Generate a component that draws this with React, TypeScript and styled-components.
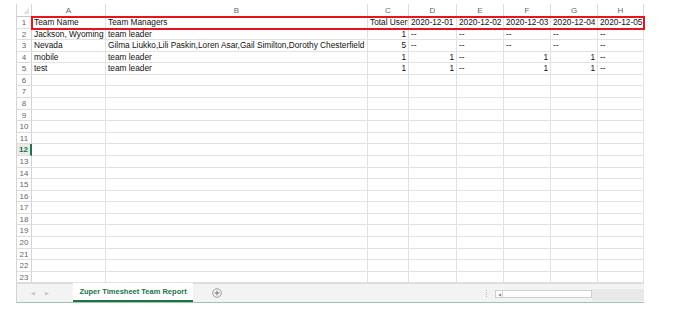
import React from "react";
import styled, { createGlobalStyle } from "styled-components";

const Global = createGlobalStyle`
  html, body { margin: 0; padding: 0; background: #fff; }
  body { font-family: "Liberation Sans", Arial, sans-serif; }
`;

const COLS = [74, 262, 41, 48, 47, 47, 47, 46];
const LETTERS = ["A", "B", "C", "D", "E", "F", "G", "H"];
const ROW_H = 11.58;
const TEMPLATE = COLS.map((c) => `${c}px`).join(" ");

type Cell = { v: string; align?: "left" | "right" };
const L = (v: string): Cell => ({ v, align: "left" });
const R = (v: string): Cell => ({ v, align: "right" });

const DATA: Cell[][] = [
  [L("Team Name"), L("Team Managers"), L("Total Users"), L("2020-12-01"), L("2020-12-02"), L("2020-12-03"), L("2020-12-04"), L("2020-12-05")],
  [L("Jackson, Wyoming"), L("team leader"), R("1"), L("--"), L("--"), L("--"), L("--"), L("--")],
  [L("Nevada"), L("Gilma Liukko,Lili Paskin,Loren Asar,Gail Similton,Dorothy Chesterfield"), R("5"), L("--"), L("--"), L("--"), L("--"), L("--")],
  [L("mobile"), L("team leader"), R("1"), R("1"), L("--"), R("1"), R("1"), L("--")],
  [L("test"), L("team leader"), R("1"), R("1"), L("--"), R("1"), R("1"), L("--")],
];

const Page = styled.div`
  padding: 4px 0 0 16px;
  width: 628px;
`;

const Sheet = styled.div`
  width: 628px;
  border-left: 1px solid #d4d4d4;
  box-sizing: border-box;
  display: flex;
  flex-direction: column;
`;

const HeaderRow = styled.div`
  display: flex;
  height: 13px;
`;

const Corner = styled.div`
  width: 15px;
  height: 13px;
  border-right: 1px solid #d8d8d8;
  border-bottom: 1px solid #c8c8c8;
  box-sizing: border-box;
  position: relative;
  &::after {
    content: "";
    position: absolute;
    right: 2px;
    bottom: 2px;
    width: 0;
    height: 0;
    border-left: 6px solid transparent;
    border-bottom: 6px solid #e2e2e2;
  }
`;

const ColHeads = styled.div`
  display: grid;
  grid-template-columns: ${TEMPLATE};
`;

const ColHead = styled.div`
  font-size: 8px;
  color: #666;
  text-align: center;
  line-height: 13px;
  border-right: 1px solid #dcdcdc;
  border-bottom: 1px solid #c8c8c8;
  box-sizing: border-box;
`;

const Row = styled.div`
  display: flex;
  height: ${ROW_H}px;
`;

const RowHead = styled.div<{ $active?: boolean }>`
  width: 15px;
  flex: none;
  box-sizing: border-box;
  font-size: 8px;
  line-height: ${ROW_H}px;
  text-align: center;
  color: ${(p) => (p.$active ? "#217346" : "#666")};
  font-weight: ${(p) => (p.$active ? 700 : 400)};
  border-right: ${(p) => (p.$active ? "2px solid #217346" : "1px solid #d4d4d4")};
  border-bottom: 1px solid #dedede;
  background: ${(p) => (p.$active ? "#eaeaea" : "#fff")};
`;

const Cells = styled.div<{ $highlight?: boolean }>`
  display: grid;
  grid-template-columns: ${TEMPLATE};
  outline: ${(p) => (p.$highlight ? "2px solid #e8141b" : "none")};
  outline-offset: -1px;
  position: relative;
  z-index: ${(p) => (p.$highlight ? 1 : 0)};
`;

const DataCell = styled.div<{ $align?: "left" | "right" }>`
  font-size: 8.3px;
  color: #111;
  line-height: ${ROW_H}px;
  padding: 0 2px;
  white-space: nowrap;
  overflow: hidden;
  text-align: ${(p) => p.$align ?? "left"};
  border-right: 1px solid #e2e2e2;
  border-bottom: 1px solid #e2e2e2;
  box-sizing: border-box;
`;

const TabBar = styled.div`
  display: flex;
  align-items: stretch;
  height: 18px;
  background: #f3f3f3;
  border-left: 1px solid #d4d4d4;
  border-top: 1px solid #dadada;
  border-bottom: 1px solid #9cc6ae;
  box-sizing: content-box;
  width: 627px;
`;

const Nav = styled.div`
  width: 56px;
  display: flex;
  align-items: center;
  gap: 10px;
  padding-left: 14px;
  box-sizing: border-box;
  font-size: 5px;
  color: #c4c4c4;
`;

const Tab = styled.div`
  width: 120px;
  background: #fff;
  color: #217346;
  font-weight: 700;
  font-size: 7.5px;
  display: flex;
  align-items: center;
  justify-content: center;
  border-bottom: 2px solid #217346;
  box-sizing: border-box;
  margin-top: -1px;
`;

const AddBtn = styled.div`
  width: 48px;
  display: flex;
  align-items: center;
  justify-content: center;
`;

const Spacer = styled.div`
  flex: 1;
`;

const Grip = styled.div`
  width: 9px;
  display: flex;
  align-items: center;
  justify-content: flex-start;
  &::before {
    content: "";
    width: 1px;
    height: 7px;
    background-image: linear-gradient(#bbb 50%, transparent 50%);
    background-size: 1px 2px;
  }
`;

const ScrollTrack = styled.div`
  width: 97px;
  margin: 6px 0 2px;
  height: 8px;
  background: #fff;
  border: 1px solid #cfcfcf;
  box-sizing: border-box;
  display: flex;
  align-items: center;
`;

const Thumb = styled.div`
  width: 6px;
  height: 100%;
  border-right: 1px solid #cfcfcf;
  font-size: 4px;
  color: #888;
  display: flex;
  align-items: center;
  justify-content: center;
`;

const ScrollRest = styled.div`
  width: 52px;
  background: #e9e9e9;
  margin: 5px 0 1px;
`;

export default function App() {
  const rows = [] as React.ReactNode[];
  for (let r = 1; r <= 23; r++) {
    const data = DATA[r - 1];
    rows.push(
      <Row key={r}>
        <RowHead $active={r === 12}>{r}</RowHead>
        <Cells $highlight={r === 1}>
          {COLS.map((_, i) => {
            const c = data ? data[i] : undefined;
            return (
              <DataCell key={i} $align={c?.align}>
                {c ? c.v : ""}
              </DataCell>
            );
          })}
        </Cells>
      </Row>
    );
  }
  return (
    <>
      <Global />
      <Page>
        <Sheet>
          <HeaderRow>
            <Corner />
            <ColHeads>
              {LETTERS.map((l) => (
                <ColHead key={l}>{l}</ColHead>
              ))}
            </ColHeads>
          </HeaderRow>
          {rows}
        </Sheet>
        <TabBar>
          <Nav>
            <span>◀</span>
            <span>▶</span>
          </Nav>
          <Tab>Zuper Timesheet Team Report</Tab>
          <AddBtn>
            <svg width="10" height="10" viewBox="0 0 10 10">
              <circle cx="5" cy="5" r="4.3" fill="none" stroke="#8a8a8a" strokeWidth="0.8" />
              <path d="M5 2.6v4.8M2.6 5h4.8" stroke="#6a6a6a" strokeWidth="0.9" />
            </svg>
          </AddBtn>
          <Spacer />
          <Grip />
          <ScrollTrack>
            <Thumb>◀</Thumb>
          </ScrollTrack>
          <ScrollRest />
        </TabBar>
      </Page>
    </>
  );
}
